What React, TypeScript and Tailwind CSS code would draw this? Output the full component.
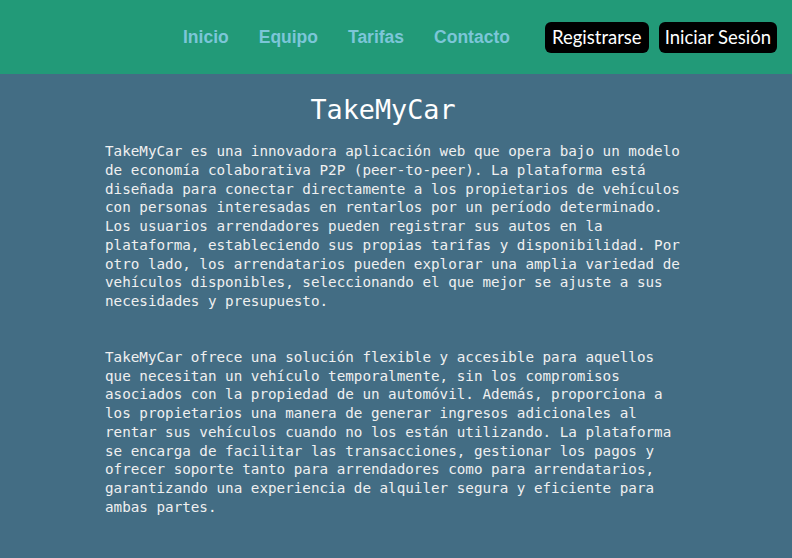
const links = ['Inicio', 'Equipo', 'Tarifas', 'Contacto']

function Navbar() {
  return (
    <header className="h-[74px] bg-[#229a78] flex items-center justify-end pr-[15px]">
      <nav className="flex items-center gap-[30px] mr-[35px]">
        {links.map((l) => (
          <a
            key={l}
            href="#"
            className="font-['Liberation_Sans',Arial,sans-serif] font-bold text-[17.5px] text-[#7cc6d8]"
          >
            {l}
          </a>
        ))}
      </nav>
      <div className="flex items-center gap-[10px]">
        <button className="h-[31px] px-[7px] rounded-[6px] bg-black text-white font-['Lato',sans-serif] text-[18.5px] leading-none">
          Registrarse
        </button>
        <button className="h-[31px] px-[6px] rounded-[6px] bg-black text-white font-['Lato',sans-serif] text-[18.5px] leading-none">
          Iniciar Sesión
        </button>
      </div>
    </header>
  )
}

export default function App() {
  return (
    <div className="min-h-[558px] bg-[#436d84] font-['DejaVu_Sans_Mono',monospace] text-[#f0f0f0]">
      <Navbar />
      <main className="w-[582px] mx-auto pb-10">
        <h1 className="mt-[20px] pr-[26px] text-center text-[26.8px] leading-[32px] text-white">
          TakeMyCar
        </h1>
        <p className="mt-[16px] text-[14.25px] leading-[18.75px]">
          TakeMyCar es una innovadora aplicación web que opera bajo un modelo de economía
          colaborativa P2P (peer-to-peer). La plataforma está diseñada para conectar
          directamente a los propietarios de vehículos con personas interesadas en rentarlos
          por un período determinado. Los usuarios arrendadores pueden registrar sus autos en
          la plataforma, estableciendo sus propias tarifas y disponibilidad. Por otro lado, los
          arrendatarios pueden explorar una amplia variedad de vehículos disponibles,
          seleccionando el que mejor se ajuste a sus necesidades y presupuesto.
        </p>
        <p className="mt-[37px] text-[14.25px] leading-[18.75px]">
          TakeMyCar ofrece una solución flexible y accesible para aquellos que necesitan un
          vehículo temporalmente, sin los compromisos asociados con la propiedad de un
          automóvil. Además, proporciona a los propietarios una manera de generar ingresos
          adicionales al rentar sus vehículos cuando no los están utilizando. La plataforma se
          encarga de facilitar las transacciones, gestionar los pagos y ofrecer soporte tanto
          para arrendadores como para arrendatarios, garantizando una experiencia de alquiler
          segura y eficiente para ambas partes.
        </p>
      </main>
    </div>
  )
}
